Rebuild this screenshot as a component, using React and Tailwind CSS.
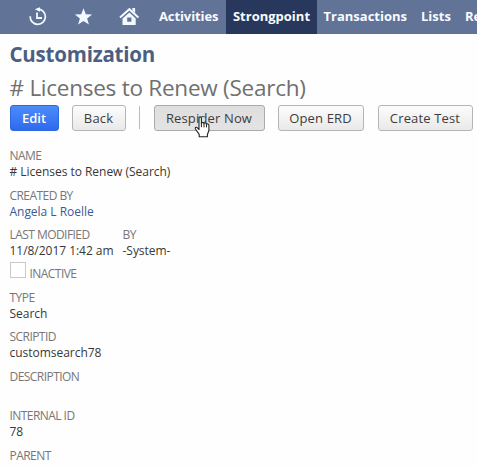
function Field({ label, value, link }) {
  return (
    <div className="h-[39.5px] shrink-0 whitespace-nowrap">
      <div className="h-4 pt-px text-[12px] leading-4 tracking-[-0.55px] text-[#777]">{label}</div>
      <div className={link ? "text-[12px] leading-[17px] tracking-[-0.03px] text-[#3d5a94]" : "text-[12px] leading-[17px] tracking-[-0.03px] text-[#383838]"}>{value}</div>
    </div>
  );
}

function Button({ children, className }) {
  return (
    <button
      className={
        "flex h-[26px] shrink-0 items-center justify-center whitespace-nowrap rounded-[3px] border pt-px text-[13px] " +
        className
      }
    >
      {children}
    </button>
  );
}

const plain = "border-[#b5b5b5] bg-linear-to-b from-[#fcfcfc] to-[#e9e9e9] font-medium tracking-[0.15px] text-[#3d3d3d]";

export default function App() {
  return (
    <div className="relative h-[466px] w-[477px] overflow-hidden bg-[#fefefe] font-['Open_Sans','Noto_Sans',sans-serif]">
      <nav className="flex h-[34px] items-center overflow-hidden whitespace-nowrap bg-[#617397] text-[13px] font-bold text-[#f8fbff]">
        <svg className="ml-[28px] h-5 w-5 shrink-0" viewBox="0 0 20 20" fill="none" stroke="#f2f9ff">
          <path d="M2.2 9.2a7.6 7.6 0 1 0 7.2-7.1" strokeWidth="1.7" />
          <path d="M12 .2 6.8 2.2 12 4.8z" fill="#f2f9ff" stroke="none" />
          <path d="M9 5.5V11h5" strokeWidth="1.8" />
        </svg>
        <svg className="ml-[26px] h-5 w-5 shrink-0" viewBox="0 0 20 20" fill="#f2f9ff">
          <path d="m9.5 1.2 2.3 6.1 6.3.2-5 3.9 1.8 6.2-5.4-3.6-5.4 3.6 1.8-6.2-5-3.9 6.3-.2z" />
        </svg>
        <svg className="ml-[25px] h-5 w-5 shrink-0" viewBox="0 0 20 20" fill="#f2f9ff">
          <path d="M13.4 1h2.7v5l-2.7-2.6z" />
          <path d="m1 10.6 9.4-8.4 9 8.4" fill="none" stroke="#f2f9ff" strokeWidth="2" />
          <path fillRule="evenodd" d="m10.4 5.4 6.3 6V18H3.5v-6.6zM8.2 10.5v4.2h4.2v-4.2z" />
        </svg>
        <span className="ml-[20px] w-[67px] shrink-0 tracking-[-0.1px]">Activities</span>
        <span className="flex h-full w-[91px] shrink-0 items-center justify-center bg-[#28385c]">Strongpoint</span>
        <span className="ml-[6.5px] w-[97.5px] shrink-0">Transactions</span>
        <span className="w-[44px] shrink-0">Lists</span>
        <span className="shrink-0">Reports</span>
      </nav>

      <main className="pl-[9.5px]">
        <h1 className="mt-[6px] h-[28px] text-[20.5px] leading-[28px] font-bold tracking-[-0.22px] text-[#4c5f83]">
          Customization
        </h1>
        <h2 className="mt-[4px] h-[32px] whitespace-nowrap text-[22.5px] leading-[32px] tracking-[-0.25px] text-[#707070]">
          # Licenses to Renew (Search)
        </h2>
        <div className="mt-px flex items-start">
          <Button className="w-[49px] border-[#2e68dc] bg-linear-to-b from-[#4b8cfb] to-[#2f69ee] font-semibold text-white">Edit</Button>
          <Button className={"ml-[13px] w-[54px] " + plain}>Back</Button>
          <div className="mt-px mr-[14px] ml-[13px] h-[23px] w-px bg-[#bbb]" />
          <Button className="w-[111px] border-[#aaa] bg-linear-to-b from-[#dedede] to-[#e3e3e3] font-medium tracking-[0.15px] text-[#3d3d3d]">
            Respider Now
          </Button>
          <Button className={"ml-[13px] w-[86px] " + plain}>Open ERD</Button>
          <Button className={"ml-[14px] w-[95px] " + plain}>Create Test</Button>
        </div>

        <section className="mt-[16px]">
          <Field label="NAME" value="# Licenses to Renew (Search)" />
          <Field label="CREATED BY" value="Angela L Roelle" link />
          <div className="flex">
            <div className="w-[113px]">
              <Field label="LAST MODIFIED" value="11/8/2017 1:42 am" />
            </div>
            <Field label="BY" value="-System-" />
          </div>
          <div className="-mt-[4px] flex h-[27px] items-start">
            <div className="h-4 w-4 border border-[#c9c9c9] bg-white" />
            <span className="mt-[4px] ml-[4px] text-[12px] leading-4 tracking-[-0.55px] text-[#777]">INACTIVE</span>
          </div>
          <Field label="TYPE" value="Search" />
          <Field label="SCRIPTID" value="customsearch78" />
          <Field label="DESCRIPTION" value="" />
          <Field label="INTERNAL ID" value="78" />
          <Field label="PARENT" value="" />
        </section>
      </main>

      <svg className="absolute top-[116px] left-[194px] h-[22px] w-[17px]" viewBox="0 0 17 22">
        <path
          d="M5.2 20.8v-2.4L1.4 13c-.7-1.2.6-2.3 1.8-1.3L5 13.5V2.2c0-1.8 2.4-1.8 2.4 0v5.2c.2-1.2 2.5-1.2 2.6.2.4-1 2.4-.8 2.5.7.7-.9 2.4-.4 2.4 1v5.2l-1.5 4v2.3z"
          fill="#fff"
          stroke="#222"
          strokeWidth="1.1"
          strokeLinejoin="round"
        />
        <path d="M7.4 7v4.2M10 7.6v3.8M12.5 8.4v3" stroke="#222" strokeWidth="1" />
      </svg>
    </div>
  );
}
